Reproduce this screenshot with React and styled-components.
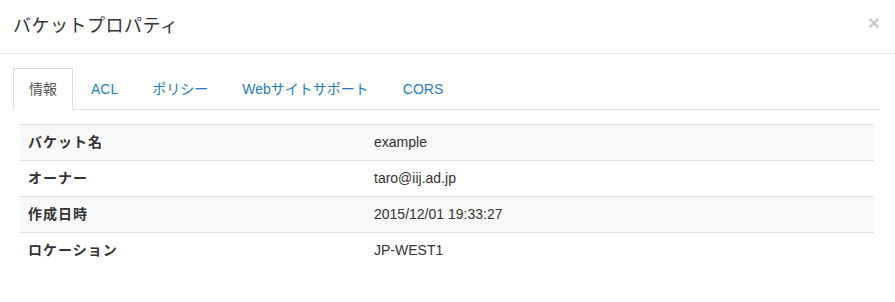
import React, { useState } from "react";
import styled, { createGlobalStyle } from "styled-components";

const GlobalStyle = createGlobalStyle`
  body {
    margin: 0;
    background: #fff;
    font-family: "Liberation Sans", "Noto Sans CJK JP", sans-serif;
    font-size: 14px;
    color: #333;
  }
`;

const tabs = ["情報", "ACL", "ポリシー", "Webサイトサポート", "CORS"];

const properties = [
  { label: "バケット名", value: "example" },
  { label: "オーナー", value: "taro@iij.ad.jp" },
  { label: "作成日時", value: "2015/12/01 19:33:27" },
  { label: "ロケーション", value: "JP-WEST1" },
];

const App = () => {
  const [active, setActive] = useState(0);

  return (
    <Modal>
      <GlobalStyle />
      <Header>
        <Title>バケットプロパティ</Title>
        <CloseButton type="button" aria-label="Close">
          ×
        </CloseButton>
      </Header>
      <Body>
        <TabList>
          {tabs.map((name, i) => (
            <Tab key={name} $active={i === active} onClick={() => setActive(i)}>
              {name}
            </Tab>
          ))}
        </TabList>
        <TabPanel>
          <Table>
            <tbody>
              {properties.map((p, i) => (
                <Row key={p.label} $striped={i % 2 === 0}>
                  <Label>{p.label}</Label>
                  <Value>{p.value}</Value>
                </Row>
              ))}
            </tbody>
          </Table>
        </TabPanel>
      </Body>
    </Modal>
  );
};

export default App;

const Modal = styled.div`
  width: 895px;
  min-height: 302px;
  background: #fff;
`;

const Header = styled.div`
  display: flex;
  align-items: center;
  justify-content: space-between;
  padding: 14px 15px 15px 13px;
  border-bottom: 1px solid #e5e5e5;
`;

const Title = styled.h4`
  margin: 0;
  font-size: 18px;
  font-weight: normal;
  line-height: 24px;
  color: #333;
  letter-spacing: 0.5px;
`;

const CloseButton = styled.button`
  padding: 0;
  margin: -8px 0 0;
  border: 0;
  background: transparent;
  font-family: "Liberation Sans", sans-serif;
  font-size: 21px;
  font-weight: bold;
  line-height: 1;
  color: #000;
  opacity: 0.2;
  cursor: pointer;
`;

const Body = styled.div`
  padding: 14px 15px 15px 13px;
`;

const TabList = styled.ul`
  display: flex;
  margin: 0;
  padding: 0;
  list-style: none;
  border-bottom: 1px solid #ddd;
`;

const Tab = styled.li`
  margin: 0 2px -1px 0;
  padding: 10px 15px;
  line-height: 20px;
  font-size: 14px;
  cursor: pointer;
  border: 1px solid ${(p) => (p.$active ? "#ddd" : "transparent")};
  border-bottom-color: transparent;
  background: ${(p) => (p.$active ? "#fff" : "transparent")};
  color: ${(p) => (p.$active ? "#555" : "#1f7bc1")};
`;

const TabPanel = styled.div`
  padding: 14px 6px 0 7px;
`;

const Table = styled.table`
  width: 100%;
  table-layout: fixed;
  border-collapse: collapse;
  border-spacing: 0;
`;

const Row = styled.tr`
  background: ${(p) => (p.$striped ? "#f8f8f8" : "#fff")};
  border-top: 1px solid #ddd;
`;

const Label = styled.th`
  width: 330px;
  padding: 8px;
  line-height: 19px;
  text-align: left;
  font-weight: bold;
  letter-spacing: 1px;
  color: #333;
`;

const Value = styled.td`
  padding: 8px;
  line-height: 19px;
  color: #333;
`;
